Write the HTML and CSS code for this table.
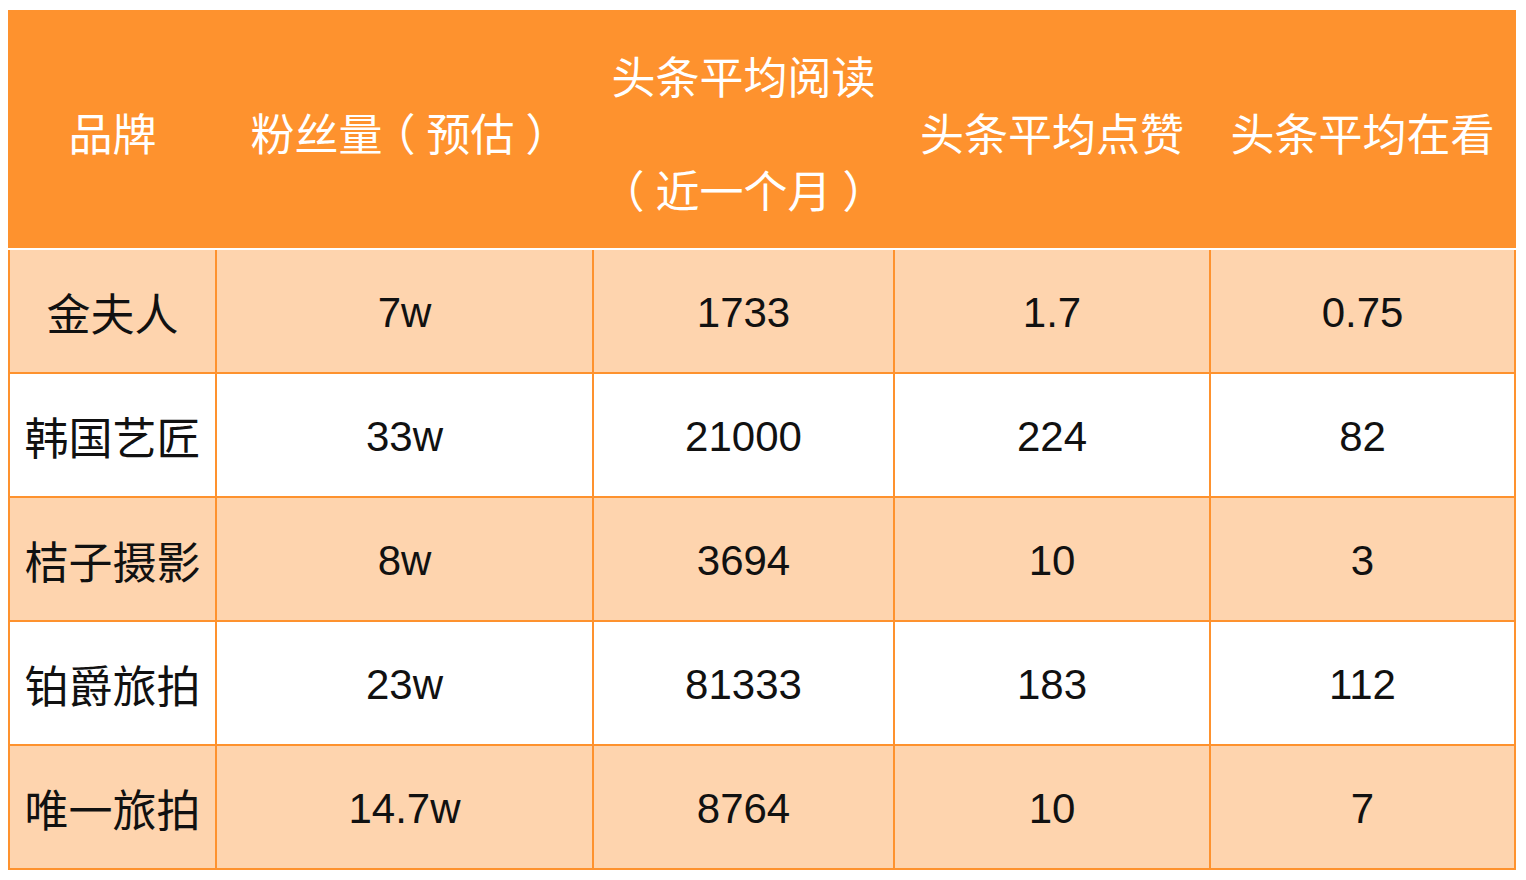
FILE: index.html
```html
<!DOCTYPE html>
<html lang="zh-CN">
<head>
<meta charset="utf-8">
<title>头条数据对比</title>
<link rel="stylesheet" href="styles.css">
</head>
<body>
<div class="table">
  <div class="head">
    <div class="hcell">品牌</div>
    <div class="hcell"><span>粉丝量<span class="paren">（</span>预估<span class="paren">）</span></span></div>
    <div class="hcell two"><span>头条平均阅读</span><span><span class="paren">（</span>近一个月<span class="paren">）</span></span></div>
    <div class="hcell">头条平均点赞</div>
    <div class="hcell">头条平均在看</div>
  </div>
  <div class="body">
    <div class="cell brand odd">金夫人</div>
    <div class="cell odd">7w</div>
    <div class="cell odd">1733</div>
    <div class="cell odd">1.7</div>
    <div class="cell odd">0.75</div>

    <div class="cell brand">韩国艺匠</div>
    <div class="cell">33w</div>
    <div class="cell">21000</div>
    <div class="cell">224</div>
    <div class="cell">82</div>

    <div class="cell brand odd">桔子摄影</div>
    <div class="cell odd">8w</div>
    <div class="cell odd">3694</div>
    <div class="cell odd">10</div>
    <div class="cell odd">3</div>

    <div class="cell brand">铂爵旅拍</div>
    <div class="cell">23w</div>
    <div class="cell">81333</div>
    <div class="cell">183</div>
    <div class="cell">112</div>

    <div class="cell brand odd">唯一旅拍</div>
    <div class="cell odd">14.7w</div>
    <div class="cell odd">8764</div>
    <div class="cell odd">10</div>
    <div class="cell odd">7</div>
  </div>
</div>
</body>
</html>
```

FILE: styles.css
```css
html, body {
  margin: 0;
  padding: 0;
  background: #ffffff;
}

body {
  padding: 10px 8px;
  font-family: "Liberation Sans", "Noto Sans CJK SC", sans-serif;
}

.table {
  width: 1508px;
  display: flex;
  flex-direction: column;
}

.head {
  display: grid;
  grid-template-columns: 205px 375px 299px 314px 303px;
  column-gap: 2px;
  padding: 0 2px;
  height: 238px;
  background: #fe922e;
}

.hcell {
  display: flex;
  align-items: center;
  justify-content: center;
  color: #ffffff;
  font-family: "Noto Sans CJK SC", sans-serif;
  font-size: 44px;
  line-height: 1;
  padding-top: 6px;
  white-space: nowrap;
}

.hcell.two {
  flex-direction: column;
  gap: 70px;
}

.paren {
  display: inline-block;
  width: 1em;
  height: 1em;
  line-height: 1;
  vertical-align: top;
  text-align: center;
  font-family: "Noto Sans CJK SC", sans-serif;
  font-feature-settings: "halt" 1;
}

.body {
  display: grid;
  grid-template-columns: 205px 375px 299px 314px 303px;
  grid-auto-rows: 122px;
  gap: 2px;
  padding: 0 2px 2px;
  border-top: 2px solid #ffffff;
  background: #fe922e;
}

.cell {
  display: flex;
  align-items: center;
  justify-content: center;
  background: #ffffff;
  color: #111111;
  font-size: 42px;
  padding-top: 3px;
  white-space: nowrap;
}

.cell.odd {
  background: #fed4ae;
}

.cell.brand {
  font-family: "Noto Sans CJK SC", sans-serif;
  font-size: 44px;
  padding-top: 1px;
}
```
